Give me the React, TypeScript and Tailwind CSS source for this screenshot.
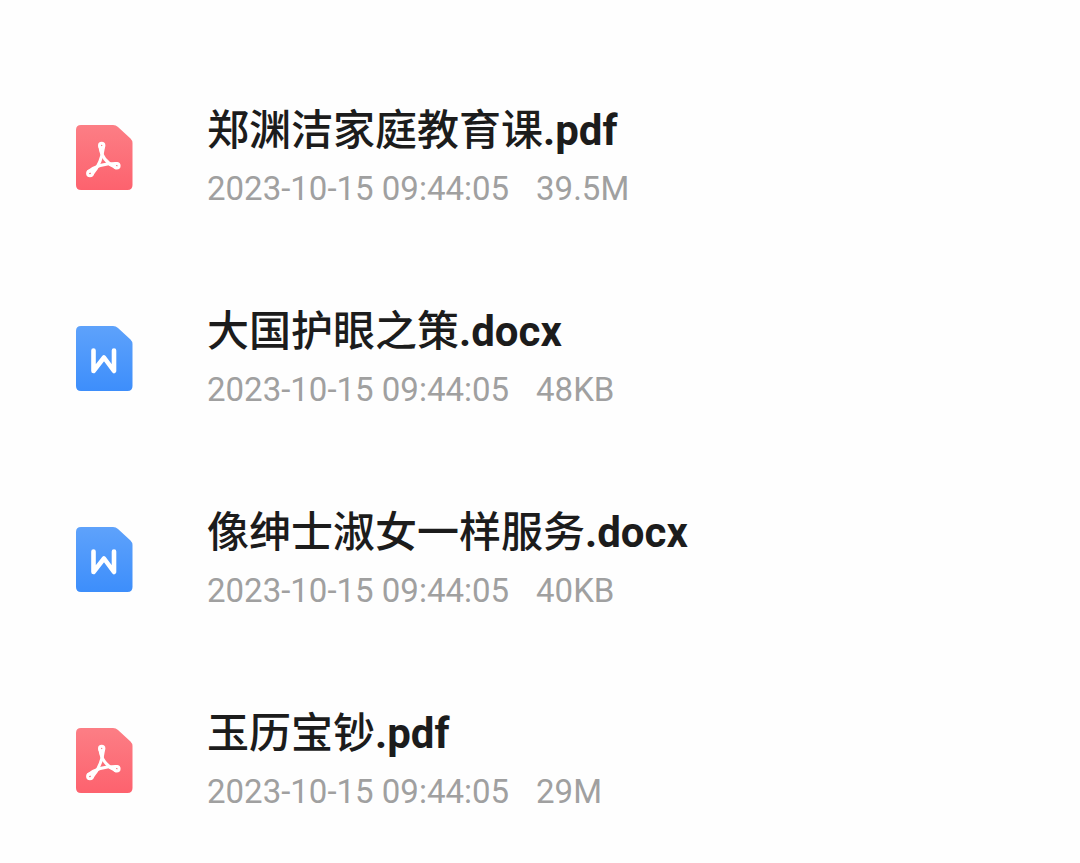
import { type ReactElement } from 'react';

type FileKind = 'pdf' | 'docx';

interface FileEntry {
  name: string;
  kind: FileKind;
  modified: string;
  size: string;
}

const FILES: FileEntry[] = [
  { name: '郑渊洁家庭教育课', kind: 'pdf', modified: '2023-10-15 09:44:05', size: '39.5M' },
  { name: '大国护眼之策', kind: 'docx', modified: '2023-10-15 09:44:05', size: '48KB' },
  { name: '像绅士淑女一样服务', kind: 'docx', modified: '2023-10-15 09:44:05', size: '40KB' },
  { name: '玉历宝钞', kind: 'pdf', modified: '2023-10-15 09:44:05', size: '29M' },
];

function FileIcon({ kind }: { kind: FileKind }): ReactElement {
  const isPdf = kind === 'pdf';
  const gradientId = `file-icon-${kind}`;

  return (
    <svg className="h-[67px] w-[58px] shrink-0" viewBox="0 0 58 67" fill="none" aria-hidden="true">
      <defs>
        <linearGradient id={gradientId} x1="0" y1="0" x2="0" y2="1">
          <stop offset="0" stopColor={isPdf ? '#fc7e85' : '#5ea2fb'} />
          <stop offset="1" stopColor={isPdf ? '#fd626e' : '#3d8efb'} />
        </linearGradient>
      </defs>
      <path
        d="M6 1H38Q41 1 43 3L55.5 14.5Q57.5 16.5 57.5 19V61Q57.5 66 52.5 66H6Q1 66 1 61V6Q1 1 6 1Z"
        fill={`url(#${gradientId})`}
      />
      {isPdf ? (
        <g stroke="white" strokeWidth="3" strokeLinecap="round" strokeLinejoin="round">
          <circle cx="26.7" cy="21.5" r="2.2" />
          <circle cx="15" cy="49.3" r="2.4" />
          <circle cx="41.8" cy="41.7" r="2.3" />
          {/* strokes that link the three loops and cross in the middle */}
          <path d="M25 23C26 31 30.5 38.5 40.8 43.6" />
          <path d="M28.5 23C27.5 32 24 42 17.2 50.4" />
          <path d="M13.6 47.5C20 42 30 39.4 41.6 39.5" />
          <path d="M26.7 24V29M17 47.5L21 44.5M39.5 41.7L35.5 40.8" />
        </g>
      ) : (
        <path
          d="M18.5 25.5V46L29 32.5L39 46V25.5"
          stroke="white"
          strokeWidth="4.6"
          strokeLinecap="round"
          strokeLinejoin="round"
        />
      )}
    </svg>
  );
}

function FileRow({ file }: { file: FileEntry }): ReactElement {
  return (
    <li className="flex h-[201px] items-center gap-[74px]">
      <FileIcon kind={file.kind} />
      <div className="min-w-0 flex-1">
        <h2 className="truncate text-[42px] leading-[62px] font-medium text-[#1c1c1c]">
          {file.name}
          <span className="font-bold">.{file.kind}</span>
        </h2>
        <p className="flex gap-[27px] text-[33px] leading-[54px] text-[#a0a0a0]">
          <time>{file.modified}</time>
          <span>{file.size}</span>
        </p>
      </div>
    </li>
  );
}

export default function App(): ReactElement {
  return (
    <main className="min-h-screen bg-[#fefefe] px-[75px] pt-[57px] font-['Roboto','Noto_Sans_CJK_SC',sans-serif]">
      <ul>
        {FILES.map((file) => (
          <FileRow key={file.name} file={file} />
        ))}
      </ul>
    </main>
  );
}
